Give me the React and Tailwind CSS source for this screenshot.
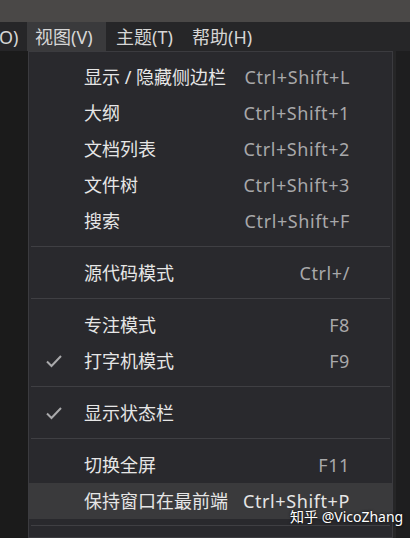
const groups = [
  [
    { label: "显示 / 隐藏侧边栏", key: "Ctrl+Shift+L" },
    { label: "大纲", key: "Ctrl+Shift+1" },
    { label: "文档列表", key: "Ctrl+Shift+2" },
    { label: "文件树", key: "Ctrl+Shift+3" },
    { label: "搜索", key: "Ctrl+Shift+F" },
  ],
  [{ label: "源代码模式", key: "Ctrl+/" }],
  [
    { label: "专注模式", key: "F8" },
    { label: "打字机模式", key: "F9", checked: true },
  ],
  [{ label: "显示状态栏", checked: true }],
  [
    { label: "切换全屏", key: "F11" },
    { label: "保持窗口在最前端", key: "Ctrl+Shift+P", active: true },
  ],
];

const font = { fontFamily: '"Noto Sans", "Noto Sans CJK SC", sans-serif' };

const Check = () => (
  <svg width="18" height="14" viewBox="0 0 18 14" fill="none">
    <path d="M2 7.5 L6.5 12 L16 2" stroke="#a9a9ab" strokeWidth="2" />
  </svg>
);

const Item = ({ item }) => (
  <div
    className={`flex items-center h-[36px] pl-[16px] pr-[42px] ${
      item.active ? "bg-[#3a3a3c]" : ""
    }`}
  >
    <div className="w-[39px] flex items-center">{item.checked && <Check />}</div>
    <span className="text-[#e6e6e6]">{item.label}</span>
    <span
      className={`ml-auto tracking-[0.6px] ${
        item.active ? "text-[#e6e6e6]" : "text-[#a8a8aa]"
      }`}
    >
      {item.key}
    </span>
  </div>
);

export default function App() {
  return (
    <div
      className="relative w-[410px] h-[538px] overflow-hidden bg-[#1b1b1b] text-[18px] leading-none"
      style={font}
    >
      {/* title bar */}
      <div className="h-[22px] bg-[#4a4847]" />

      {/* menu bar */}
      <div className="flex h-[29px] bg-[#262628] text-[#d6d6d6]">
        <div className="w-[28px] flex items-center -ml-[1px]">O)</div>
        <div className="w-[79px] flex items-center pl-[8px] bg-[#3a3a3c]">
          视图(V)
        </div>
        <div className="w-[76px] flex items-center pl-[10px]">主题(T)</div>
        <div className="w-[80px] flex items-center pl-[10px]">帮助(H)</div>
      </div>

      <div className="flex h-[487px]">
        <div className="w-[28px]" />
        {/* dropdown */}
        <div className="w-[365px] bg-[#29292d] border border-[#3b3b3f] pt-[7px]">
          {groups.map((g, gi) => (
            <div key={gi}>
              {gi > 0 && (
                <div className="mx-[2px] mt-[7px] mb-[8px] h-px bg-[#3f3f43]" />
              )}
              {g.map((item) => (
                <Item key={item.label} item={item} />
              ))}
            </div>
          ))}
          <div className="mx-[2px] mt-[6px] h-px bg-[#3f3f43]" />
        </div>
        <div className="flex-1 bg-[#1e1e1f] border-l-[3px] border-[#262627]" />
      </div>

      {/* watermark */}
      <div className="absolute left-[290px] top-[510px] whitespace-nowrap text-[14px] text-white [text-shadow:0_0_3px_#000]">
        知乎 @VicoZhang
      </div>
    </div>
  );
}
